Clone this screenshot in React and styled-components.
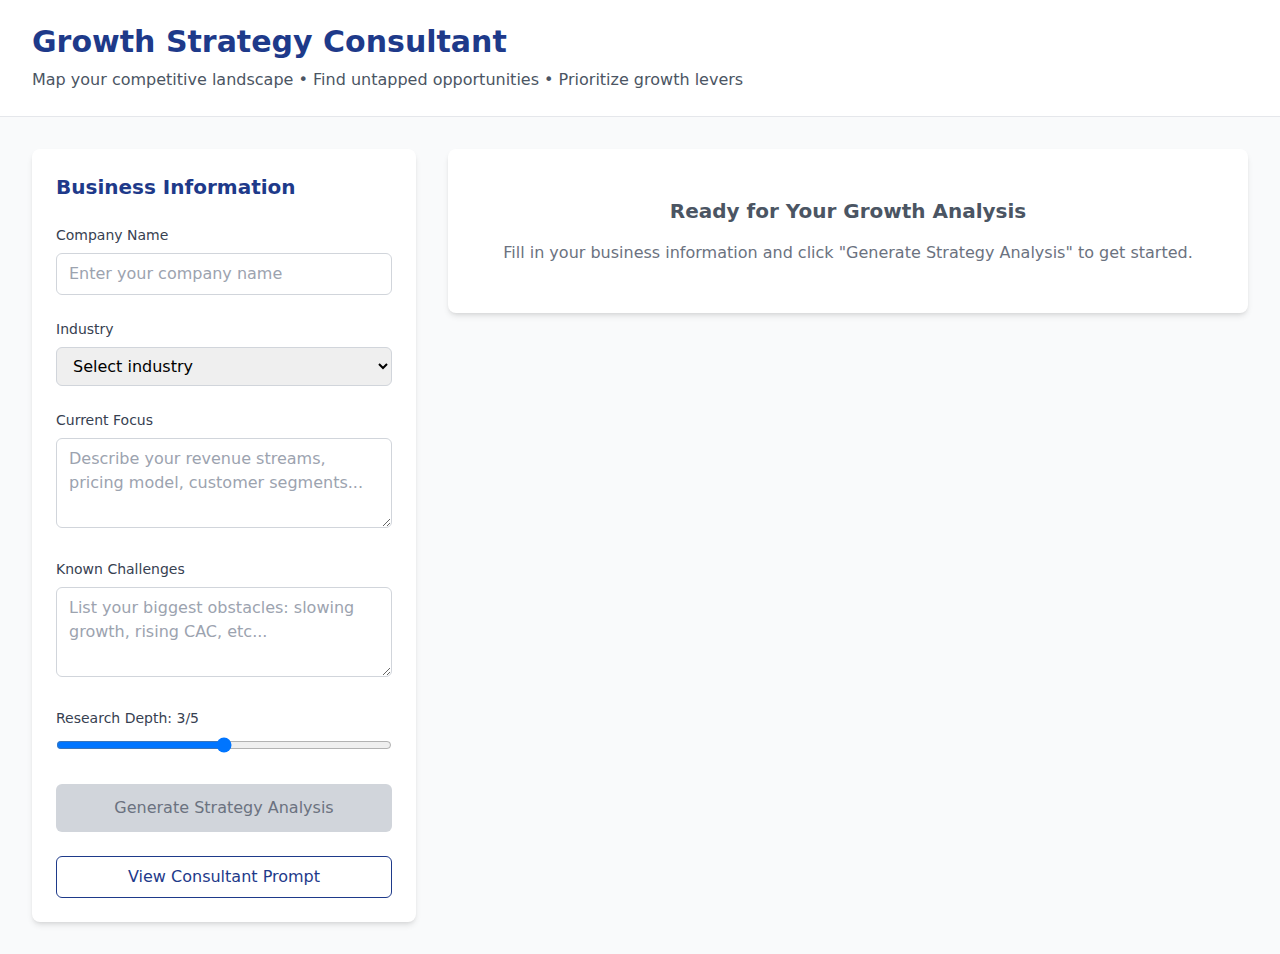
import React, { useState } from "react";
import styled, { createGlobalStyle } from "styled-components";

const GlobalStyle = createGlobalStyle`
  * { box-sizing: border-box; }
  body {
    margin: 0;
    background: #f9fafb;
    font-family: "DejaVu Sans", "Liberation Sans", sans-serif;
    line-height: 1.5;
    color: #111827;
  }
`;

const Header = styled.header`
  background: #fff;
  border-bottom: 1px solid #e5e7eb;
  padding: 24px 32px;
`;

const Title = styled.h1`
  margin: 0 0 8px;
  font-size: 30px;
  line-height: 36px;
  font-weight: bold;
  color: #1e3a8a;
`;

const Subtitle = styled.p`
  margin: 0;
  font-size: 16px;
  line-height: 24px;
  color: #4b5563;
`;

const Main = styled.main`
  display: grid;
  grid-template-columns: 384px 1fr;
  gap: 32px;
  align-items: start;
  padding: 32px;
`;

const Card = styled.section`
  background: #fff;
  border-radius: 8px;
  box-shadow: 0 4px 6px -1px rgba(0, 0, 0, 0.1), 0 2px 4px -2px rgba(0, 0, 0, 0.1);
  padding: ${(p) => (p.$empty ? "48px" : "24px")};
  text-align: ${(p) => (p.$empty ? "center" : "left")};
`;

const CardTitle = styled.h2`
  margin: 0 0 24px;
  font-size: 20px;
  line-height: 28px;
  font-weight: bold;
  color: #1e3a8a;
`;

const Field = styled.div`
  margin-bottom: 24px;
`;

const Label = styled.label`
  display: block;
  margin-bottom: 8px;
  font-size: 14px;
  line-height: 20px;
  color: #374151;
`;

const Input = styled.input`
  display: block;
  width: 100%;
  padding: 8px 12px;
  border: 1px solid #d1d5db;
  border-radius: 6px;
  font-family: inherit;
  font-size: 16px;
  line-height: 24px;
  color: #111827;
  &::placeholder { color: #9ca3af; }
`;

const Select = styled.select`
  display: block;
  width: 100%;
  height: 39px;
  padding: 0 8px 0 12px;
  border: 1px solid #d1d5db;
  border-radius: 6px;
  background: #efefef;
  font-family: inherit;
  font-size: 16px;
  color: #000;
`;

const TextArea = styled.textarea`
  width: 100%;
  padding: 8px 12px;
  border: 1px solid #d1d5db;
  border-radius: 6px;
  font-family: inherit;
  font-size: 16px;
  line-height: 24px;
  color: #111827;
  &::placeholder { color: #9ca3af; }
`;

const Range = styled.input`
  width: 100%;
  margin: 0;
`;

const PrimaryButton = styled.button`
  display: block;
  width: 100%;
  padding: 12px;
  border: none;
  border-radius: 6px;
  background: #d1d5db;
  color: #6b7280;
  font-family: inherit;
  font-size: 16px;
  line-height: 24px;
  cursor: not-allowed;
`;

const OutlineButton = styled.button`
  display: block;
  width: 100%;
  margin-top: 24px;
  padding: 8px;
  border: 1px solid #1e3a8a;
  border-radius: 6px;
  background: #fff;
  color: #1e3a8a;
  font-family: inherit;
  font-size: 16px;
  line-height: 24px;
  cursor: pointer;
`;

const EmptyTitle = styled.h3`
  margin: 0 0 16px;
  font-size: 20px;
  line-height: 28px;
  font-weight: bold;
  color: #4b5563;
`;

const EmptyText = styled.p`
  margin: 0;
  font-size: 16px;
  line-height: 24px;
  color: #6b7280;
`;

const industries = ["SaaS", "E-commerce", "Fintech", "Healthcare", "Manufacturing", "Other"];

export default function App() {
  const [company, setCompany] = useState("");
  const [industry, setIndustry] = useState("");
  const [focus, setFocus] = useState("");
  const [challenges, setChallenges] = useState("");
  const [depth, setDepth] = useState(3);

  const ready = company && industry;

  return (
    <>
      <GlobalStyle />
      <Header>
        <Title>Growth Strategy Consultant</Title>
        <Subtitle>
          Map your competitive landscape • Find untapped opportunities • Prioritize growth levers
        </Subtitle>
      </Header>
      <Main>
        <Card>
          <CardTitle>Business Information</CardTitle>
          <Field>
            <Label>Company Name</Label>
            <Input
              type="text"
              placeholder="Enter your company name"
              value={company}
              onChange={(e) => setCompany(e.target.value)}
            />
          </Field>
          <Field>
            <Label>Industry</Label>
            <Select value={industry} onChange={(e) => setIndustry(e.target.value)}>
              <option value="">Select industry</option>
              {industries.map((i) => (
                <option key={i} value={i}>{i}</option>
              ))}
            </Select>
          </Field>
          <Field>
            <Label>Current Focus</Label>
            <TextArea
              rows={3}
              placeholder="Describe your revenue streams, pricing model, customer segments..."
              value={focus}
              onChange={(e) => setFocus(e.target.value)}
            />
          </Field>
          <Field>
            <Label>Known Challenges</Label>
            <TextArea
              rows={3}
              placeholder="List your biggest obstacles: slowing growth, rising CAC, etc..."
              value={challenges}
              onChange={(e) => setChallenges(e.target.value)}
            />
          </Field>
          <Field>
            <Label>Research Depth: {depth}/5</Label>
            <Range
              type="range"
              min="1"
              max="5"
              value={depth}
              onChange={(e) => setDepth(Number(e.target.value))}
            />
          </Field>
          <PrimaryButton disabled={!ready}>Generate Strategy Analysis</PrimaryButton>
          <OutlineButton>View Consultant Prompt</OutlineButton>
        </Card>
        <Card $empty>
          <EmptyTitle>Ready for Your Growth Analysis</EmptyTitle>
          <EmptyText>
            Fill in your business information and click "Generate Strategy Analysis" to get started.
          </EmptyText>
        </Card>
      </Main>
    </>
  );
}
